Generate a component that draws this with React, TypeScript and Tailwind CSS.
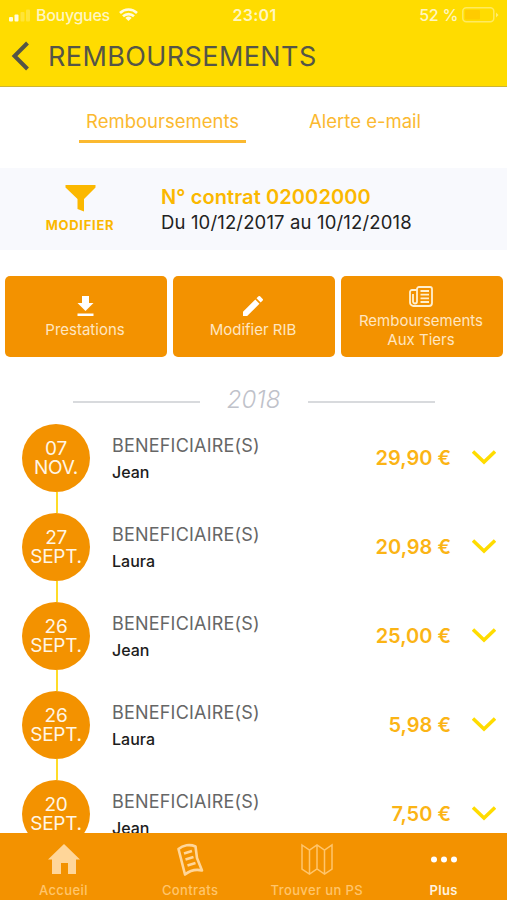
import { useState } from 'react';

interface IRefund {
  day: string;
  month: string;
  name: string;
  amount: string;
}

const refunds: IRefund[] = [
  { day: '07', month: 'NOV.', name: 'Jean', amount: '29,90 €' },
  { day: '27', month: 'SEPT.', name: 'Laura', amount: '20,98 €' },
  { day: '26', month: 'SEPT.', name: 'Jean', amount: '25,00 €' },
  { day: '26', month: 'SEPT.', name: 'Laura', amount: '5,98 €' },
  { day: '20', month: 'SEPT.', name: 'Jean', amount: '7,50 €' },
];

const StatusBar = () => (
  <div className="h-[30px] grid grid-cols-[1fr_auto_1fr] items-center pl-[9px] pr-[8px] text-[#fff6c0] text-[16px]">
    <div className="flex items-center">
      <svg width="22" height="13" viewBox="0 0 22 13" fill="#fffbe0">
        <rect x="0" y="8" width="4" height="4.500" rx="1" />
        <rect x="5.500" y="5.500" width="4" height="7" rx="1" />
        <rect x="11.500" y="3" width="4" height="9.500" rx="1" opacity=".25" />
        <rect x="17" y="0.500" width="4" height="12" rx="1" opacity=".25" />
      </svg>
      <span className="ml-[5px] font-medium tracking-[-0.3px]">Bouygues</span>
      <svg className="ml-[9px]" width="19" height="14" viewBox="0 0 19 14" fill="none" stroke="#fffbe0" strokeWidth="2.600">
        <path d="M1 5a12.200 12.200 0 0 1 17 0" />
        <path d="M4 8.300a8 8 0 0 1 11 0" />
        <path d="M9.500 13L6.400 10a4.500 4.500 0 0 1 6.200 0z" fill="#fffbe0" stroke="none" />
      </svg>
    </div>
    <span className="pl-[1px] font-semibold tracking-[0.3px]">23:01</span>
    <div className="flex items-center justify-end">
      <span className="font-medium tracking-[-0.3px]">52 %</span>
      <svg className="ml-[4px]" width="37" height="16" viewBox="0 0 37 16">
        <rect x="0.800" y="0.800" width="31" height="14" rx="3.500" fill="none" stroke="#ffea60" strokeWidth="1.500" />
        <rect x="3" y="3" width="15" height="9.600" rx="1" fill="#ffcb00" />
        <path d="M34 5.500v5l2.500-2.500z" fill="#ffec70" />
      </svg>
    </div>
  </div>
);

const Header = () => (
  <header className="h-[87px] shrink-0 bg-[#ffdc00] border-b border-[#cdb534]">
    <StatusBar />
    <div className="h-[52px] flex items-center pl-[11px] text-[#555547]">
      <svg width="19" height="30" viewBox="0 0 19 30" fill="none" stroke="currentColor" strokeWidth="4">
        <path d="M16.500 2L3.500 15l13 13" />
      </svg>
      <h1 className="ml-[18px] text-[27px] leading-none tracking-[0.4px] whitespace-nowrap">REMBOURSEMENTS</h1>
    </div>
  </header>
);

const tabs = ['Remboursements', 'Alerte e-mail'];

const DownloadIcon = () => (
  <svg width="17" height="20" viewBox="0 0 17 20" fill="#fff">
    <path d="M5 0h7v7h4.500l-8 8-8-8H5z" />
    <path d="M.5 17.500h16V20H.5z" />
  </svg>
);

const PencilIcon = () => (
  <svg width="20" height="20" viewBox="3 3 18 18" fill="#fff">
    <path d="M3 17.250V21h3.750L17.810 9.940l-3.750-3.750zM20.710 7.040a1 1 0 0 0 0-1.410l-2.340-2.340a1 1 0 0 0-1.410 0l-1.830 1.830 3.750 3.750z" />
  </svg>
);

const PapersIcon = () => (
  <svg width="24" height="21" viewBox="0 0 24 21" fill="none" stroke="#fff0d0" strokeWidth="1.800">
    <path d="M8 3a2 2 0 0 1 2-2h11a2 2 0 0 1 2 2v14a3 3 0 0 1-3 3H4.500A3.500 3.500 0 0 1 1 16.500V6a2 2 0 0 1 2-2h5" />
    <path d="M8 3v12.500a2 2 0 0 1-4 0V8" />
    <path d="M11.500 5h8.500M11.500 8.700h8.500M11.500 12.400h8.500M11.500 16h8.500" />
  </svg>
);

const actions = [
  { label: 'Prestations', icon: <DownloadIcon /> },
  { label: 'Modifier RIB', icon: <PencilIcon /> },
  { label: 'Remboursements Aux Tiers', icon: <PapersIcon /> },
];

const RefundRow = ({ refund, last }: { refund: IRefund; last: boolean }) => (
  <li className="h-[89px] shrink-0 flex">
    <div className="w-[68px] ml-[22px] flex flex-col items-center">
      <div className="size-[68px] shrink-0 rounded-full bg-[#f39200] text-[#fff6e6] text-[19px] leading-[19px] tracking-[-0.3px] flex flex-col items-center justify-center">
        <span>{refund.day}</span>
        <span>{refund.month}</span>
      </div>
      {!last && <div className="w-[2px] flex-1 ml-[2px] bg-[#ffdc28]" />}
    </div>
    <div className="ml-[22px] pt-[10px] flex-1">
      <p className="text-[18px] leading-[24px] tracking-[0.2px] text-[#666]">BENEFICIAIRE(S)</p>
      <p className="mt-[3px] text-[16px] leading-[22px] font-medium text-[#1c1c1c]">{refund.name}</p>
    </div>
    <div className="h-[68px] flex items-center pr-[11px]">
      <span className="text-[20px] font-semibold text-[#fbb415]">{refund.amount}</span>
      <svg className="ml-[21px] -mt-[2px]" width="24" height="15" viewBox="0 0 24 15" fill="none" stroke="#ffdc00" strokeWidth="3.500">
        <path d="M1 1.500l11 10.500L23 1.500" />
      </svg>
    </div>
  </li>
);

const HomeIcon = () => (
  <svg className="ml-[1px]" width="32" height="32" viewBox="0 0 32 32" fill="#ffd699">
    <path d="M16 1l16 15.500h-4V31h-8V20h-7v11H4V16.500H0z" />
  </svg>
);

const ContractIcon = () => (
  <svg width="28" height="34" viewBox="0 0 28 34" fill="none" stroke="#ffd699" strokeWidth="2.600" strokeLinejoin="round">
    <path d="M2.500 6C7 2 14 1 19.500 3.500L21 15 26 27.500C20 26 14 27.500 9 31.500z" />
    <path d="M8 10.500l8-2.500M9.500 16.500l8-2.500M11.500 22.500l8-2.500" />
  </svg>
);

const MapIcon = () => (
  <svg width="32" height="32" viewBox="0 0 32 32" fill="none" stroke="#ffc56b" strokeWidth="1.500">
    <path d="M1 2l7.500 5L16 2l7.500 5L31 2v24l-7.500 5L16 26l-7.500 5L1 26zM8.500 7v24M16 2v24M23.500 7v24" />
  </svg>
);

const MoreIcon = () => (
  <svg width="28" height="32" viewBox="0 0 28 32" fill="#fff">
    <circle cx="4" cy="16.500" r="3" />
    <circle cx="14" cy="16.500" r="3" />
    <circle cx="24" cy="16.500" r="3" />
  </svg>
);

const navItems = [
  { label: 'Accueil', icon: <HomeIcon /> },
  { label: 'Contrats', icon: <ContractIcon /> },
  { label: 'Trouver un PS', icon: <MapIcon /> },
  { label: 'Plus', icon: <MoreIcon /> },
];

const App: React.FC = () => {
  const [activeTab, setActiveTab] = useState(0);

  return (
    <div className="w-[507px] h-[900px] flex flex-col overflow-hidden bg-white font-[Inter,sans-serif]">
      <Header />

      <nav className="h-[81px] shrink-0 flex gap-[56px] pt-[20px] pl-[79px]">
        {tabs.map((tab, index) => (
          <button
            key={tab}
            onClick={() => setActiveTab(index)}
            className={`h-[36px] px-[7px] pt-[1px] flex justify-center text-[18.5px] leading-[27px] whitespace-nowrap text-[#fbb930] ${activeTab === index ? 'border-b-3 border-[#fbb930]' : ''}`}
          >
            {tab}
          </button>
        ))}
      </nav>

      <section className="h-[82px] shrink-0 bg-[#f8f9fd] flex">
        <button className="w-[160px] pt-[17px] flex flex-col items-center text-[#fbb800]">
          <svg width="31" height="27" viewBox="0 0 31 27" fill="currentColor">
            <path d="M.5 0h30v2.500L19 14v12.500L12.500 24V14L.5 2.500z" />
          </svg>
          <span className="mt-[5px] text-[13px] leading-[16px] font-bold tracking-[0.7px]">MODIFIER</span>
        </button>
        <div className="pt-[16px] pl-[1px]">
          <p className="text-[20px] leading-[26px] font-semibold tracking-[0.1px] text-[#fbb800]">N° contrat 02002000</p>
          <p className="text-[18.5px] leading-[24px] tracking-[0.15px] text-[#222]">Du 10/12/2017 au 10/12/2018</p>
        </div>
      </section>

      <div className="mt-[26px] pl-[5px] pr-[4px] shrink-0 flex gap-[6px]">
        {actions.map(({ label, icon }) => (
          <button
            key={label}
            className="h-[81px] flex-1 rounded-[5px] bg-[#f39200] flex flex-col items-center justify-center gap-[4px] pl-[12px] pr-[14px] pt-[2px] text-[15px] leading-[19px] text-[#ffe6c0]"
          >
            {icon}
            <span>{label}</span>
          </button>
        ))}
      </div>

      <div className="mt-[29px] h-[28px] shrink-0 flex items-center justify-center">
        <div className="w-[127px] h-[2px] mt-[4px] bg-[#d8dadd]" />
        <span className="w-[108px] text-center text-[24px] leading-none italic font-light text-[#bfc2ca]">2018</span>
        <div className="w-[127px] h-[2px] mt-[4px] bg-[#d8dadd]" />
      </div>

      <ul className="mt-[10px] flex-1 min-h-0 overflow-hidden flex flex-col">
        {refunds.map((refund, index) => (
          <RefundRow key={index} refund={refund} last={index === refunds.length - 1} />
        ))}
      </ul>

      <footer className="h-[67px] shrink-0 bg-[#f39200] grid grid-cols-4 pt-[10px]">
        {navItems.map(({ label, icon }) => (
          <button
            key={label}
            className={`flex flex-col items-center text-[13px] leading-[16px] tracking-[0.4px] ${label === 'Plus' ? 'font-semibold text-[#fff3df]' : 'font-medium text-[#ffc56b]'}`}
          >
            <span className="h-[39px]">{icon}</span>
            {label}
          </button>
        ))}
      </footer>
    </div>
  );
};

export default App;
